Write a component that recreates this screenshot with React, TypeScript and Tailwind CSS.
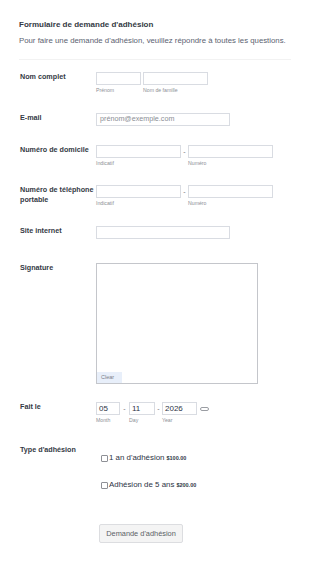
import React from "react";

const inp = "h-[13px] border border-[#d9dce2] bg-white box-border";
const lbl = "w-[76px] shrink-0 text-[7.2px] leading-[10px] font-bold text-[#343a44]";
const sub = "text-[5.2px] leading-[6px] text-[#8d8f96] mt-[2px]";

export default function App() {
  return (
    <div className="w-[310px] h-[562px] bg-white overflow-hidden" style={{ fontFamily: '"Liberation Sans", Arial, sans-serif' }}>
      <div className="px-[19px] pt-[20px]">
        <div className="text-[8px] leading-[10px] font-bold text-[#343a44]">Formulaire de demande d'adhésion</div>
        <div className="mt-[6px] text-[7.8px] leading-[10px] text-[#5b6270]">Pour faire une demande d'adhésion, veuillez répondre à toutes les questions.</div>
        <div className="mt-[13px] w-[272px] border-t border-[#f2f2f2]"></div>
      </div>
      <div className="pl-[20px] mt-[12px] flex flex-col">
        {/* Nom complet */}
        <div className="flex h-[41px]">
          <div className={lbl}>Nom complet</div>
          <div className="flex gap-[2px]">
            <div className="flex flex-col">
              <div className={`${inp} w-[45px]`}></div>
              <div className={sub}>Prénom</div>
            </div>
            <div className="flex flex-col">
              <div className={`${inp} w-[65px]`}></div>
              <div className={sub}>Nom de famille</div>
            </div>
          </div>
        </div>
        {/* Email */}
        <div className="flex h-[32px]">
          <div className={lbl}>E-mail</div>
          <div className={`${inp} w-[134px] flex items-center pl-[3px] text-[7.2px] text-[#8a8d94]`}>prénom@exemple.com</div>
        </div>
        {/* Domicile */}
        <div className="flex h-[40px]">
          <div className={lbl}>Numéro de domicile</div>
          <div className="flex">
            <div className="flex flex-col">
              <div className={`${inp} w-[85px]`}></div>
              <div className={sub}>Indicatif</div>
            </div>
            <div className="w-[7px] text-center text-[7px] leading-[13px] text-[#777]">-</div>
            <div className="flex flex-col">
              <div className={`${inp} w-[85px]`}></div>
              <div className={sub}>Numéro</div>
            </div>
          </div>
        </div>
        {/* Portable */}
        <div className="flex h-[41px]">
          <div className={lbl}>Numéro de téléphone portable</div>
          <div className="flex">
            <div className="flex flex-col">
              <div className={`${inp} w-[85px]`}></div>
              <div className={sub}>Indicatif</div>
            </div>
            <div className="w-[7px] text-center text-[7px] leading-[13px] text-[#777]">-</div>
            <div className="flex flex-col">
              <div className={`${inp} w-[85px]`}></div>
              <div className={sub}>Numéro</div>
            </div>
          </div>
        </div>
        {/* Site */}
        <div className="flex h-[37px]">
          <div className={lbl}>Site internet</div>
          <div className={`${inp} w-[134px]`}></div>
        </div>
        {/* Signature */}
        <div className="flex h-[139px]">
          <div className={lbl}>Signature</div>
          <div className="w-[162px] h-[121px] border border-[#c4c6cb] flex flex-col justify-end">
            <div className="w-[25px] h-[11px] bg-[#e8effa] text-[5.5px] leading-[11px] text-[#7c8089] pl-[4px]">Clear</div>
          </div>
        </div>
        {/* Fait le */}
        <div className="flex h-[43px]">
          <div className={lbl}>Fait le</div>
          <div className="flex">
            <div className="flex flex-col">
              <div className={`${inp} w-[24px] text-[8px] leading-[11px] pl-[2px] text-[#2c3345]`}>05</div>
              <div className={sub}>Month</div>
            </div>
            <div className="w-[9px] text-center text-[7px] leading-[13px] text-[#777]">-</div>
            <div className="flex flex-col">
              <div className={`${inp} w-[26px] text-[8px] leading-[11px] pl-[2px] text-[#2c3345]`}>11</div>
              <div className={sub}>Day</div>
            </div>
            <div className="w-[7px] text-center text-[7px] leading-[13px] text-[#777]">-</div>
            <div className="flex flex-col">
              <div className={`${inp} w-[35px] text-[8px] leading-[11px] pl-[2px] text-[#2c3345]`}>2026</div>
              <div className={sub}>Year</div>
            </div>
            <div className="ml-[3px] mt-[5px] w-[9px] h-[4px] rounded-full border border-[#9a9da3]"></div>
          </div>
        </div>
        {/* Type */}
        <div className="flex h-[79px]">
          <div className={lbl}>Type d'adhésion</div>
          <div className="flex flex-col pl-[5px] pt-[8px] gap-[17px]">
            <div className="flex items-center text-[7.9px] leading-[10px] text-[#2c3345]">
              <span className="inline-block w-[7px] h-[7px] border border-[#8e9096] rounded-[1px] mr-[1px]"></span>
              1 an d'adhésion<span className="ml-[2px] text-[5.5px] font-bold">$100.00</span>
            </div>
            <div className="flex items-center text-[7.9px] leading-[10px] text-[#2c3345]">
              <span className="inline-block w-[7px] h-[7px] border border-[#8e9096] rounded-[1px] mr-[1px]"></span>
              Adhésion de 5 ans<span className="ml-[2px] text-[5.5px] font-bold">$200.00</span>
            </div>
          </div>
        </div>
        {/* Button */}
        <div className="flex">
          <div className="w-[79px] shrink-0"></div>
          <div className="w-[84px] h-[19px] bg-[#f4f4f4] border border-[#dcdde0] rounded-[2px] text-[7.4px] leading-[17px] text-center text-[#5b5f66]">Demande d'adhésion</div>
        </div>
      </div>
    </div>
  );
}
